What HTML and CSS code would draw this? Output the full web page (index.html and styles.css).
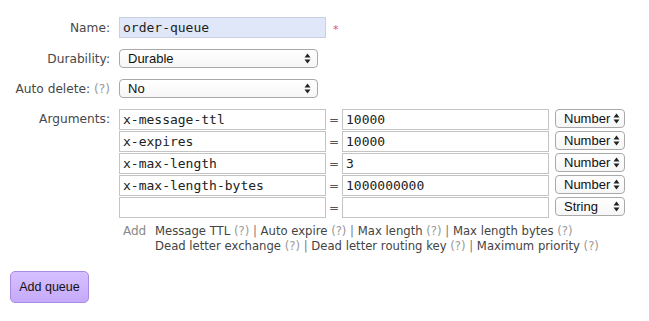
FILE: index.html
```html
<!DOCTYPE html>
<html>
<head>
<meta charset="utf-8">
<link rel="stylesheet" href="styles.css">
</head>
<body>
<div class="form">
  <div class="grid">
    <div class="label">Name:</div>
    <div class="field name-field">
      <div class="input name-input mono">order-queue</div>
      <span class="required">*</span>
    </div>

    <div class="label">Durability:</div>
    <div class="field">
      <div class="select wide"><span>Durable</span><svg class="arrows" width="7" height="11" viewBox="0 0 7 11"><path d="M3.5 0.5 L6.5 4.5 L0.5 4.5 Z M3.5 10.5 L6.5 6.5 L0.5 6.5 Z" fill="#222"/></svg></div>
    </div>

    <div class="label">Auto delete: <span class="help">(?)</span></div>
    <div class="field">
      <div class="select wide"><span>No</span><svg class="arrows" width="7" height="11" viewBox="0 0 7 11"><path d="M3.5 0.5 L6.5 4.5 L0.5 4.5 Z M3.5 10.5 L6.5 6.5 L0.5 6.5 Z" fill="#222"/></svg></div>
    </div>

    <div class="label top">Arguments:</div>
    <div class="field args-block">
      <div class="args">
        <div class="input mono">x-message-ttl</div><div class="eq">=</div><div class="input mono">10000</div>
        <div class="select small"><span>Number</span><svg class="arrows" width="7" height="11" viewBox="0 0 7 11"><path d="M3.5 0.5 L6.5 4.5 L0.5 4.5 Z M3.5 10.5 L6.5 6.5 L0.5 6.5 Z" fill="#222"/></svg></div>

        <div class="input mono">x-expires</div><div class="eq">=</div><div class="input mono">10000</div>
        <div class="select small"><span>Number</span><svg class="arrows" width="7" height="11" viewBox="0 0 7 11"><path d="M3.5 0.5 L6.5 4.5 L0.5 4.5 Z M3.5 10.5 L6.5 6.5 L0.5 6.5 Z" fill="#222"/></svg></div>

        <div class="input mono">x-max-length</div><div class="eq">=</div><div class="input mono">3</div>
        <div class="select small"><span>Number</span><svg class="arrows" width="7" height="11" viewBox="0 0 7 11"><path d="M3.5 0.5 L6.5 4.5 L0.5 4.5 Z M3.5 10.5 L6.5 6.5 L0.5 6.5 Z" fill="#222"/></svg></div>

        <div class="input mono">x-max-length-bytes</div><div class="eq">=</div><div class="input mono">1000000000</div>
        <div class="select small"><span>Number</span><svg class="arrows" width="7" height="11" viewBox="0 0 7 11"><path d="M3.5 0.5 L6.5 4.5 L0.5 4.5 Z M3.5 10.5 L6.5 6.5 L0.5 6.5 Z" fill="#222"/></svg></div>

        <div class="input mono"></div><div class="eq">=</div><div class="input mono"></div>
        <div class="select small"><span>String</span><svg class="arrows" width="7" height="11" viewBox="0 0 7 11"><path d="M3.5 0.5 L6.5 4.5 L0.5 4.5 Z M3.5 10.5 L6.5 6.5 L0.5 6.5 Z" fill="#222"/></svg></div>
      </div>
      <div class="add-row">
        <div class="add">Add</div>
        <div class="links">
          <span class="link">Message TTL</span> <span class="help">(?)</span> <span class="sep">|</span>
          <span class="link">Auto expire</span> <span class="help">(?)</span> <span class="sep">|</span>
          <span class="link">Max length</span> <span class="help">(?)</span> <span class="sep">|</span>
          <span class="link">Max length bytes</span> <span class="help">(?)</span><br>
          <span class="link">Dead letter exchange</span> <span class="help">(?)</span> <span class="sep">|</span>
          <span class="link">Dead letter routing key</span> <span class="help">(?)</span> <span class="sep">|</span>
          <span class="link">Maximum priority</span> <span class="help">(?)</span>
        </div>
      </div>
    </div>
  </div>
  <button class="btn">Add queue</button>
</div>
</body>
</html>
```

FILE: styles.css
```css
html, body {
  margin: 0;
  padding: 0;
  background: #fff;
}
body {
  font-family: "DejaVu Sans", Verdana, sans-serif;
  font-size: 12px;
  color: #484848;
}
.form {
  padding: 17px 0 0 10px;
}
.grid {
  display: grid;
  grid-template-columns: 100px auto;
  column-gap: 9px;
  row-gap: 11px;
  align-items: center;
}
.label {
  text-align: right;
  white-space: nowrap;
  font-size: 12.2px;
}
.label.top {
  align-self: start;
  line-height: 21px;
}
.help {
  color: #999;
}
.field {
  display: flex;
  align-items: center;
}
.input {
  box-sizing: border-box;
  height: 21px;
  border: 1px solid #c4c4c4;
  background: #fff;
  padding: 0 3px;
  line-height: 19px;
  color: #222;
  white-space: nowrap;
  overflow: hidden;
}
.mono {
  font-family: "DejaVu Sans Mono", Menlo, monospace;
  font-size: 13px;
}
.name-input {
  width: 207px;
  background: #dfe7f8;
  border-color: #c8d0e2;
}
.required {
  color: #e0506a;
  margin-left: 7px;
  margin-top: 3px;
  font-size: 11px;
  line-height: 11px;
}
.select {
  box-sizing: border-box;
  height: 19px;
  border: 1px solid #a9a9a9;
  border-radius: 4px;
  background: linear-gradient(#ffffff, #f6f6f6);
  display: flex;
  align-items: center;
  justify-content: space-between;
  padding: 0 6px 0 8px;
  font-family: "Liberation Sans", Arial, sans-serif;
  font-size: 13px;
  color: #111;
}
.select.wide {
  width: 199px;
}
.select.small {
  width: 70px;
  padding: 0 4px 0 8px;
}
.arrows {
  flex: none;
}
.args {
  display: grid;
  grid-template-columns: 207px 16px 207px 70px;
  column-gap: 0;
  row-gap: 1px;
  align-items: center;
}
.args .select {
  margin-left: 6px;
  margin-top: -2px;
}
.eq {
  text-align: center;
  color: #555;
  font-size: 12px;
}
.args-block {
  flex-direction: column;
  align-items: flex-start;
}
.add-row {
  display: flex;
  margin-top: 6px;
  padding-left: 4px;
  line-height: 15px;
}
.add {
  width: 32px;
  color: #888;
}
.links {
  color: #444;
  white-space: nowrap;
  font-size: 11.65px;
}
.sep {
  color: #777;
}
.btn {
  display: block;
  margin-top: 17px;
  width: 79px;
  height: 32px;
  box-sizing: border-box;
  border: 1px solid #a88ae0;
  border-radius: 5px;
  background: linear-gradient(#d6c0ff, #c6aafb);
  font-family: "Liberation Sans", Arial, sans-serif;
  font-size: 12.5px;
  color: #111;
  padding: 0;
}
```
